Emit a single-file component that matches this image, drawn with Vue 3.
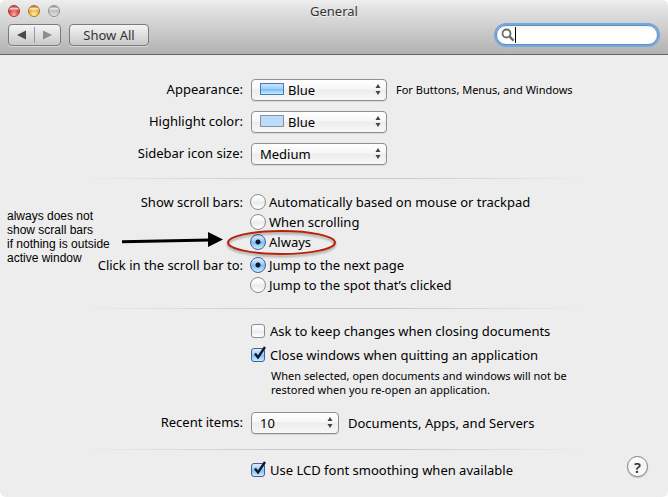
<template>
  <div class="window">
    <header class="titlebar">
      <div class="title-row">
        <div class="lights">
          <button class="light red" aria-label="Close"></button>
          <button class="light yellow" aria-label="Minimize"></button>
          <button class="light gray" aria-label="Zoom" disabled></button>
        </div>
        <h1>General</h1>
      </div>
      <div class="toolbar">
        <div class="nav">
          <button aria-label="Back">
            <svg width="9" height="10" viewBox="0 0 9 10"><path d="M0 5L9 0.5V9.5Z" fill="#4a4a4a" /></svg>
          </button>
          <button aria-label="Forward">
            <svg width="9" height="10" viewBox="0 0 9 10"><path d="M9 5L0 0.5V9.5Z" fill="#8c8c8c" /></svg>
          </button>
        </div>
        <button class="show-all">Show All</button>
        <div class="search">
          <svg width="14" height="14" viewBox="0 0 14 14" fill="none" stroke="#6b6b6b">
            <circle cx="5.5" cy="5.5" r="4" stroke-width="1.8" />
            <path d="M8.6 8.6L12.6 12.6" stroke-width="2.4" />
          </svg>
          <span class="caret"></span>
          <input v-model="query" type="text" aria-label="Search" />
        </div>
      </div>
    </header>

    <main>
      <section class="section selects">
        <div v-for="item in menus" :key="item.id" class="row">
          <label class="name" :for="item.id">{{ item.label }}</label>
          <div class="field">
            <div class="popup">
              <span v-if="item.swatch" class="swatch" :class="item.swatch"></span>
              <select :id="item.id" v-model="item.value" :class="{ indented: item.swatch }">
                <option v-for="option in item.options" :key="option">{{ option }}</option>
              </select>
              <svg class="arrows" width="6" height="11" viewBox="0 0 6 11"><path d="M3 0L5.5 4H0.5ZM3 11L0.5 7H5.5Z" fill="#444" /></svg>
            </div>
            <span v-if="item.hint" class="hint">{{ item.hint }}</span>
          </div>
        </div>
      </section>

      <hr />

      <section class="section radios">
        <div class="row" role="radiogroup" aria-labelledby="show-label">
          <span id="show-label" class="name">Show scroll bars:</span>
          <div class="radio-list">
            <label v-for="option in showOptions" :key="option" class="choice">
              <input v-model="showBars" type="radio" name="show" :value="option" />
              <span>{{ option }}</span>
            </label>
          </div>
        </div>
        <div class="row" role="radiogroup" aria-labelledby="click-label">
          <span id="click-label" class="name">Click in the scroll bar to:</span>
          <div class="radio-list">
            <label v-for="option in clickOptions" :key="option" class="choice">
              <input v-model="clickBar" type="radio" name="click" :value="option" />
              <span>{{ option }}</span>
            </label>
          </div>
        </div>

        <p class="note">always does not<br />show scrall bars<br />if nothing is outside<br />active window</p>
        <svg class="marks" width="220" height="32" viewBox="0 0 220 32">
          <path d="M2 14.8L90 13" stroke="#000" stroke-width="3" />
          <path d="M88 5L103 12.5L88 20Z" fill="#000" />
          <ellipse class="ring" cx="161.5" cy="15.5" rx="53.5" ry="11.5" fill="none" stroke="#b92209" stroke-width="2" />
        </svg>
      </section>

      <hr />

      <section class="section closing">
        <div class="row">
          <div class="options">
            <label class="choice">
              <input v-model="askToKeep" type="checkbox" />
              <svg v-if="askToKeep" class="tick" width="16" height="16" viewBox="0 0 16 16"><path d="M4 7.5L7 11.5L14 1" /></svg>
              <span>Ask to keep changes when closing documents</span>
            </label>
            <label class="choice">
              <input v-model="closeWindows" type="checkbox" />
              <svg v-if="closeWindows" class="tick" width="16" height="16" viewBox="0 0 16 16"><path d="M4 7.5L7 11.5L14 1" /></svg>
              <span>Close windows when quitting an application</span>
            </label>
            <p class="help-text">When selected, open documents and windows will not be<br />restored when you re-open an application.</p>
          </div>
        </div>
        <div class="row">
          <label class="name" for="recent">Recent items:</label>
          <div class="field">
            <div class="popup small">
              <select id="recent" v-model="recent">
                <option v-for="n in [5, 10, 15, 20]" :key="n" :value="n">{{ n }}</option>
              </select>
              <svg class="arrows" width="6" height="11" viewBox="0 0 6 11"><path d="M3 0L5.5 4H0.5ZM3 11L0.5 7H5.5Z" fill="#444" /></svg>
            </div>
            <span>Documents, Apps, and Servers</span>
          </div>
        </div>
      </section>

      <hr />

      <section class="section footer">
        <div class="row">
          <label class="choice">
            <input v-model="smoothing" type="checkbox" />
            <svg v-if="smoothing" class="tick" width="16" height="16" viewBox="0 0 16 16"><path d="M4 7.5L7 11.5L14 1" /></svg>
            <span>Use LCD font smoothing when available</span>
          </label>
        </div>
        <button class="help" aria-label="Help">?</button>
      </section>
    </main>
  </div>
</template>

<script setup>
import { reactive, ref } from 'vue'

const query = ref('')

const menus = reactive([
  { id: 'appearance', label: 'Appearance:', value: 'Blue', options: ['Blue', 'Graphite'], swatch: 'glossy', hint: 'For Buttons, Menus, and Windows' },
  { id: 'highlight', label: 'Highlight color:', value: 'Blue', options: ['Blue', 'Gold', 'Green'], swatch: 'flat' },
  { id: 'sidebar', label: 'Sidebar icon size:', value: 'Medium', options: ['Small', 'Medium', 'Large'] }
])

const showOptions = ['Automatically based on mouse or trackpad', 'When scrolling', 'Always']
const clickOptions = ['Jump to the next page', 'Jump to the spot that’s clicked']
const showBars = ref('Always')
const clickBar = ref('Jump to the next page')

const askToKeep = ref(false)
const closeWindows = ref(true)
const recent = ref(10)
const smoothing = ref(true)
</script>

<style>
body {
  margin: 0;
  background: #fff;
}
</style>

<style scoped>
.window {
  box-sizing: border-box;
  min-height: 100vh;
  overflow: hidden;
  border-radius: 6px;
  background: #ededed;
  color: #000;
  font: 13px/20px "Lucida Grande", "Noto Sans", "Open Sans", sans-serif;
}

button,
input,
select {
  margin: 0;
  padding: 0;
  font: inherit;
  color: inherit;
}

h1,
p {
  margin: 0;
}

.titlebar {
  border-bottom: 1px solid #666;
  background: linear-gradient(#eee, #e0e0e0 20%, #b2b2b2);
}

.title-row {
  display: grid;
  grid-template-columns: 1fr auto 1fr;
  align-items: center;
  height: 22px;
  padding: 0 8px;
}

.title-row h1 {
  font-size: 13px;
  font-weight: 400;
  color: #333;
  text-shadow: 0 1px 0 #f5f5f5;
}

.lights {
  display: flex;
  gap: 8px;
}

.light {
  width: 12px;
  height: 12px;
  border: 1px solid;
  border-radius: 50%;
}

.red {
  border-color: #9c3c3b;
  background: radial-gradient(ellipse at 50% 100%, #ffb6ac, transparent 60%), linear-gradient(#b5605e 10%, #f3cdcb 25%, #e0393a 50%, #f0615c);
}

.yellow {
  border-color: #a8722a;
  background: radial-gradient(ellipse at 50% 100%, #fff5a0, transparent 60%), linear-gradient(#c48943 10%, #fbe7c4 25%, #eda733 50%, #ffd35a);
}

.gray {
  border-color: #8f8f8f;
  background: linear-gradient(#a5a5a5 10%, #e6e6e6 25%, #bdbdbd 50%, #e4e4e4);
}

.toolbar {
  display: flex;
  align-items: center;
  gap: 8px;
  padding: 2px 8px 8px;
}

.nav,
.show-all {
  box-sizing: border-box;
  height: 22px;
  border: 1px solid #7b7b7b;
  border-radius: 4px;
  background: linear-gradient(#f4f4f4, #c9c9c9);
  box-shadow: 0 1px 0 #dadada;
}

.nav {
  display: flex;
  width: 53px;
}

.nav button {
  display: flex;
  flex: 1;
  align-items: center;
  justify-content: center;
  border: 0;
  background: none;
}

.nav button + button {
  margin: 2px 0;
  border-left: 1px solid #999;
}

.show-all {
  width: 80px;
  line-height: 18px;
  color: #333;
}

.search {
  box-sizing: border-box;
  display: flex;
  align-items: center;
  width: 162px;
  height: 20px;
  margin: 0 2px 0 auto;
  padding: 0 8px 0 4px;
  border: 1px solid #5a8fc8;
  border-radius: 10px;
  background: linear-gradient(#f4f4f4, #fff 30%);
  box-shadow: 0 0 0 2px #74a7dc;
}

.caret {
  flex: none;
  width: 1px;
  height: 16px;
  background: #000;
}

.search input {
  flex: 1;
  min-width: 0;
  border: 0;
  outline: 0;
  background: none;
}

hr {
  height: 1px;
  margin: 0 50px;
  border: 0;
  background: linear-gradient(90deg, transparent 5%, #c8c8c8 40%, #c8c8c8 60%, transparent 95%);
}

.section {
  display: flex;
  flex-direction: column;
}

.row {
  display: grid;
  grid-template-columns: 243px 1fr;
  column-gap: 8px;
}

.name {
  text-align: right;
}

.selects {
  gap: 10px;
  padding: 24px 0 13px;
}

.field {
  display: flex;
  align-items: center;
  gap: 9px;
}

.popup {
  position: relative;
  width: 136px;
  height: 22px;
}

.popup.small {
  width: 88px;
}

select {
  box-sizing: border-box;
  width: 100%;
  height: 22px;
  padding: 0 20px 1px 8px;
  border: 1px solid #8e8e8e;
  border-radius: 4px;
  appearance: none;
  background: linear-gradient(#fff, #f7f7f7 45%, #ececec 50%, #f8f8f8);
  box-shadow: 0 1px 0 #d5d5d5;
}

select.indented {
  padding-left: 36px;
}

.arrows {
  position: absolute;
  top: 5px;
  right: 6px;
  pointer-events: none;
}

.swatch {
  position: absolute;
  top: 4px;
  left: 9px;
  box-sizing: border-box;
  width: 24px;
  height: 12px;
  border: 1px solid #8a939c;
  background: #bddbfb;
  pointer-events: none;
}

.swatch.glossy {
  border-color: #4f78b8;
  background: linear-gradient(#cbe3fb, #a3d1fa 45%, #72b7f6 50%, #c4f0ff);
}

.hint {
  font-size: 11px;
}

.radios {
  position: relative;
  gap: 3px;
  padding: 13px 0;
}

.radio-list {
  margin-left: -1px;
}

.choice {
  position: relative;
  display: flex;
  align-items: center;
  height: 20px;
}

input[type="radio"],
input[type="checkbox"] {
  flex: none;
  box-sizing: border-box;
  appearance: none;
  border: 1px solid #8c8c8c;
  background: linear-gradient(#fff, #f4f4f4 45%, #e9e9e9 50%, #fff);
}

input[type="radio"] {
  width: 16px;
  height: 16px;
  margin-right: 3px;
  border-radius: 50%;
}

input[type="radio"]:checked {
  border-color: #4c5d92;
  background: radial-gradient(circle, #0a1a33 2px, transparent 3px), linear-gradient(#e3f0fd, #9dccf8 45%, #79b9f3 50%, #c6f0ff);
}

input[type="checkbox"] {
  width: 14px;
  height: 14px;
  margin-right: 5px;
  border-radius: 3px;
}

input[type="checkbox"]:checked {
  border-color: #4a5c96;
  background: linear-gradient(#dcecfd, #a2d0fa 45%, #7abcf5 50%, #c6f1ff);
}

.tick {
  position: absolute;
  top: 1px;
  left: 0;
  fill: none;
  stroke: #0c1a30;
  stroke-width: 2.4;
  pointer-events: none;
}

.note {
  position: absolute;
  top: 30px;
  left: 7px;
  font: 12px/14px "Liberation Sans", Arial, sans-serif;
}

.marks {
  position: absolute;
  top: 48px;
  left: 120px;
  pointer-events: none;
}

.ring {
  filter: drop-shadow(0 2px 1px #0005);
}

.closing {
  gap: 15px;
  padding: 12px 0 15px;
}

.options {
  display: flex;
  grid-column: 2;
  flex-direction: column;
  gap: 4px;
}

.help-text {
  padding-left: 20px;
  font-size: 11px;
  line-height: 14px;
}

.footer {
  flex-direction: row;
  align-items: flex-start;
  justify-content: space-between;
  padding: 6px 20px 16px 0;
}

.footer .row {
  flex: 1;
  padding-top: 4px;
}

.footer .choice {
  grid-column: 2;
}

.help {
  width: 21px;
  height: 21px;
  border: 1px solid #808080;
  border-radius: 50%;
  background: linear-gradient(#fff, #f3f3f3 50%, #fff);
  box-shadow: 0 1px 1px #bbb;
  font-size: 15px;
  font-weight: 600;
  line-height: 18px;
  color: #333;
}
</style>
